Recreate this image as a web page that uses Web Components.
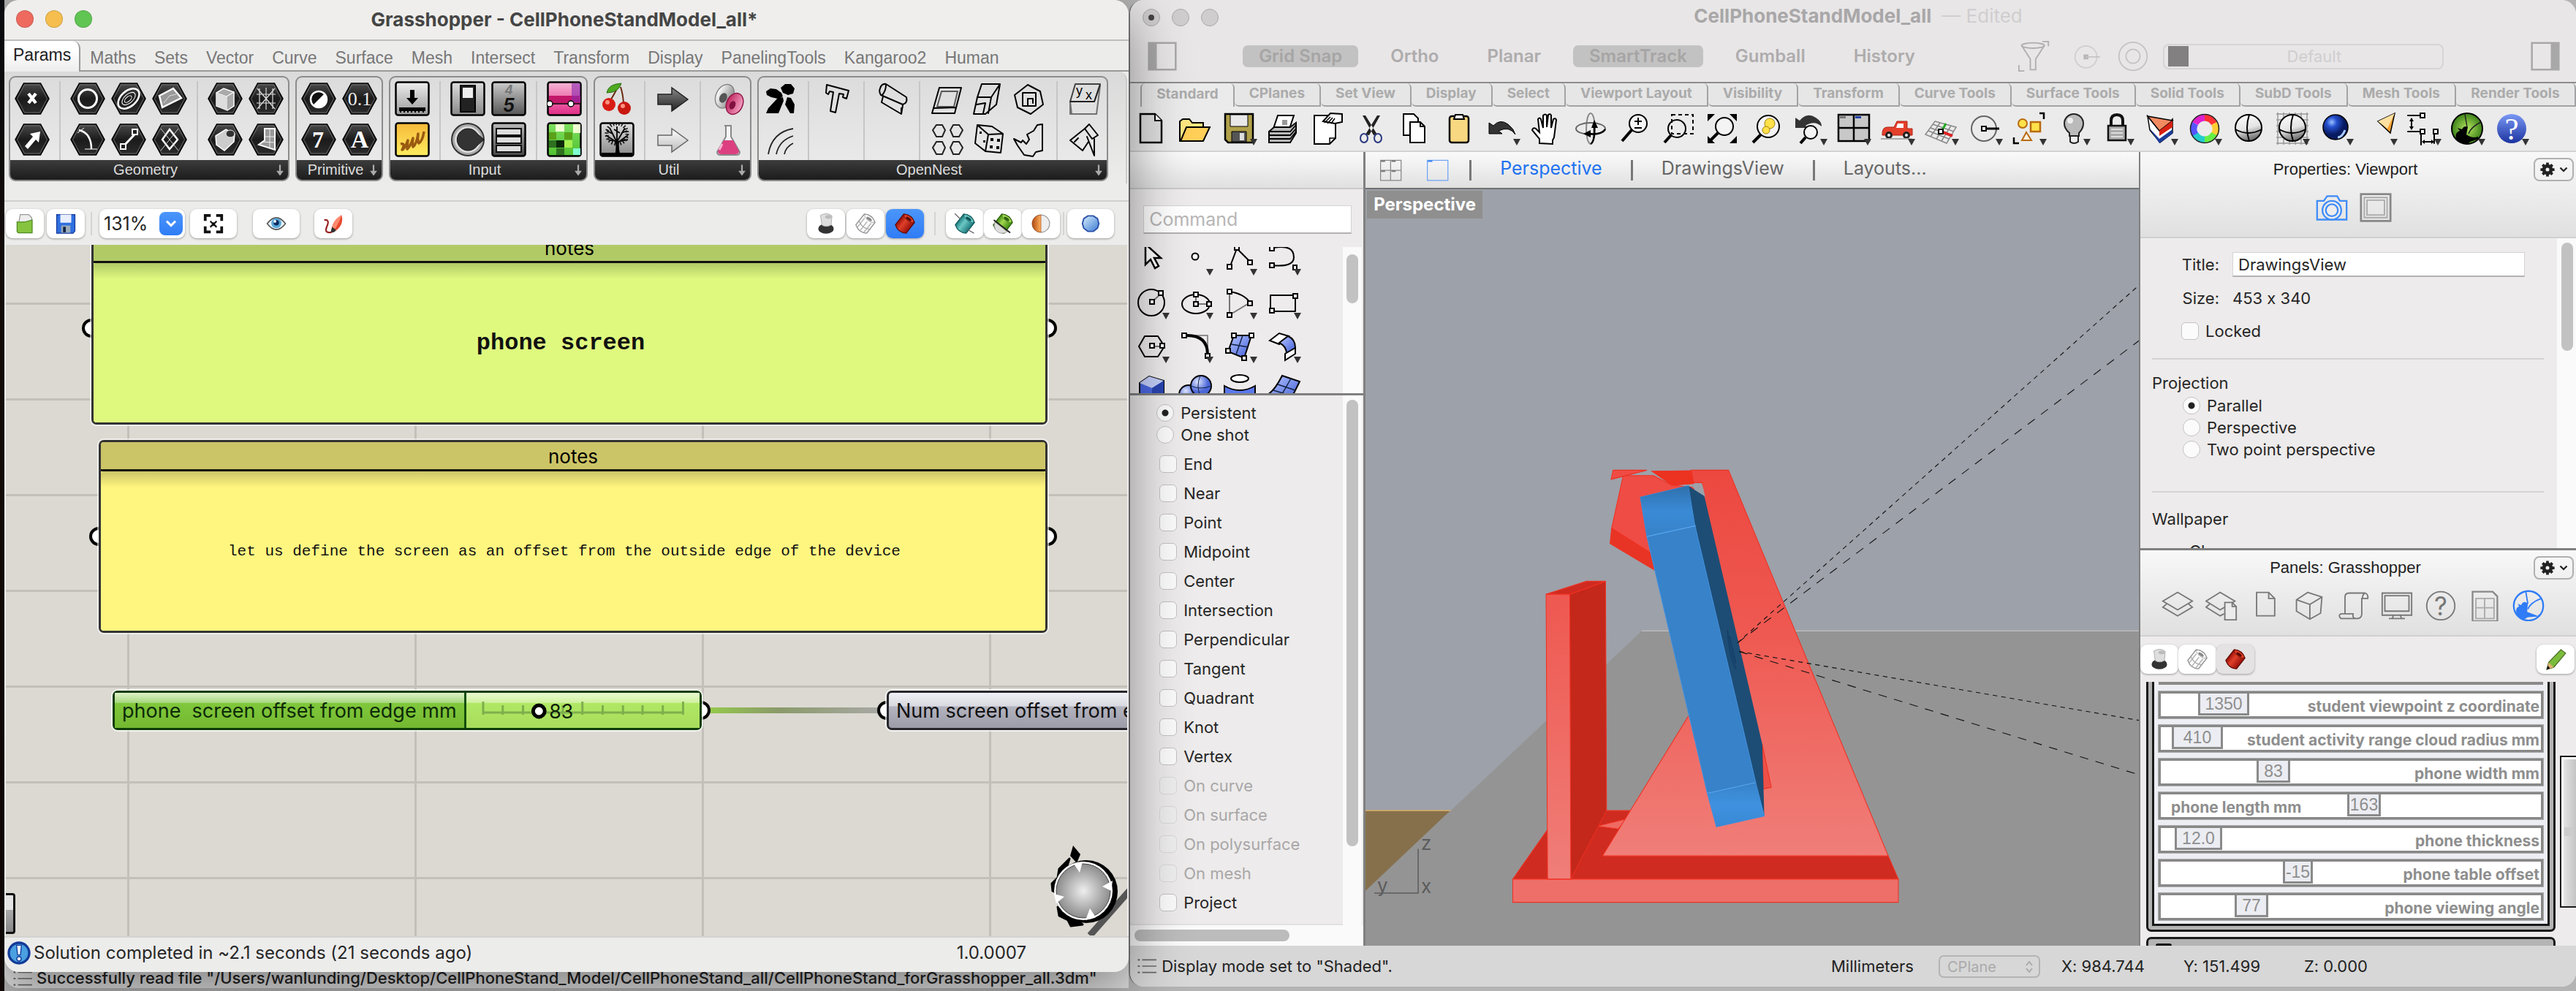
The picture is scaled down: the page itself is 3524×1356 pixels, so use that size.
<!DOCTYPE html>
<html lang="en">
<head>
<meta charset="utf-8">
<title>Grasshopper - CellPhoneStandModel_all*</title>
<style>
html,body{margin:0;height:100%}
body{font-family:Inter,"Liberation Sans",sans-serif;font-size:22px;font-feature-settings:"calt" 0;color:#262626;background:#b3b3b3;overflow:hidden}
</style>
</head>
<body>
<desktop-view></desktop-view>
<script>
/* ---------- small helper for declaring elements ---------- */
function def(tag, style, html) {
  customElements.define(tag, class extends HTMLElement {
    connectedCallback() {
      if (this.shadowRoot) return;
      const root = this.attachShadow({ mode: 'open' });
      root.innerHTML = '<style>*{box-sizing:border-box}button,input,select{font:inherit;color:inherit;margin:0}' + style + '</style>' +
        (typeof html === 'function' ? html(this) : html);
    }
  });
}

/* ---------- icon library, each drawn on a 48 x 48 grid ---------- */
const hex = s => `<defs><linearGradient id="h" x2="0" y2="1"><stop offset="0" stop-color="#4a4a4a"/><stop offset=".5" stop-color="#1b1b1b"/><stop offset="1" stop-color="#2c2c2c"/></linearGradient></defs><path d="M12.500 3h23L47 24 35.500 45h-23L1 24z" fill="url(#h)" stroke="#000" stroke-width="1.500"/><path d="M13.500 5h21L44.500 24 34.500 43h-21L3.500 24z" fill="none" stroke="#777" stroke-width=".8"/>${s}`;
const tile = (fill, s) => `<defs><linearGradient id="t" x2="0" y2="1"><stop offset="0" stop-color="${fill[0]}"/><stop offset="1" stop-color="${fill[1]}"/></linearGradient></defs><rect x="1.500" y="1.500" width="45" height="45" rx="3" fill="url(#t)" stroke="#000" stroke-width="2.500"/>${s}`;
const sq = (x, y) => `<rect x="${x - 3}" y="${y - 3}" width="6" height="6" fill="#fff" stroke="#000" stroke-width="2"/>`;
const tri = '<path d="M38 38h10l-5 9z" fill="#333"/>';
const L = (d, x = '') => `<path d="${d}" fill="none" stroke="#000" stroke-width="2" stroke-linejoin="round" stroke-linecap="round" ${x}/>`;
const blues = '<defs><linearGradient id="b" x1="0" y1="0" x2="1" y2="1"><stop offset="0" stop-color="#b9c8ff"/><stop offset="1" stop-color="#3c5ad8"/></linearGradient><radialGradient id="s" cx=".35" cy=".3"><stop offset="0" stop-color="#dfe6ff"/><stop offset="1" stop-color="#4a66d8"/></radialGradient></defs>';
const can = (a, b, c) => `<defs><linearGradient id="c" x1="0" y1="0" x2="1" y2="0"><stop offset="0" stop-color="${b}"/><stop offset=".4" stop-color="${a}"/><stop offset="1" stop-color="${b}"/></linearGradient></defs><g transform="rotate(38 24 24)"><path d="M9 9Q24-1 39 9v30Q24 49 9 39z" fill="url(#c)" stroke="${c}" stroke-width="2" stroke-linejoin="round"/><ellipse cx="24" cy="10" rx="13" ry="5" fill="${a}" stroke="${c}"/><ellipse cx="24" cy="11" rx="7" ry="3" fill="${c}"/></g>`;
const ICON = {
 point: hex('<path d="M19 17l10 13M29 17L19 30" stroke="#fff" stroke-width="4.500"/>'),
 vector: hex('<path d="M14 33L25 20l-4-4 14-3-2 15-4-4-11 13z" fill="#fff"/>'),
 circle: hex('<circle cx="24" cy="24" r="12.500" fill="none" stroke="#fff" stroke-width="3"/>'),
 ellipse: hex('<g fill="none" stroke="#fff" transform="rotate(-42 24 24)"><ellipse cx="24" cy="24" rx="17" ry="10.500" stroke-width="2.500"/><ellipse cx="24" cy="24" rx="11" ry="6"/><ellipse cx="23" cy="24" rx="6" ry="3"/></g>'),
 surface: hex('<path d="M10 20l19-10 11 13-26 13z" fill="#999" stroke="#fff" stroke-width="2.500"/><path d="M16 30l8-10 9-2" stroke="#ddd" fill="none"/>'),
 boxp: hex('<path d="M12 16l10-6 14 5v19l-9 6-15-6z" fill="#aaa" stroke="#fff" stroke-width="1.500"/><path d="M12 16l14 5 10-6-10 6v19" stroke="#fff" fill="none"/><path d="M12 16l14 5v19l-14-6z" fill="#ddd"/>'),
 mesh: hex('<path d="M24 9v30M11 18h26M11 30h26M15 10v28M33 10v28M12 10l24 28M36 10L12 38" stroke="#ddd" stroke-width="1.200"/>'),
 arc: hex('<path d="M12 11q17 4 17 26" stroke="#fff" stroke-width="2.500" fill="none"/><path d="M10 15l9-7M20 37h17" stroke="#fff"/>'),
 line: hex('<path d="M16 34L33 16" stroke="#fff" stroke-width="3"/><path d="M29 10h7v7h-7zM13 30h7v7h-7z" fill="#222" stroke="#fff" stroke-width="2"/>'),
 field: hex('<path d="M24 10l11 14-11 13-10-13z" fill="none" stroke="#fff" stroke-width="2.500"/><path d="M12 9l24 30M36 9L12 39" stroke="#ccc"/>'),
 brep: hex('<path d="M11 19l14-9 12 6-1 11-13 12-11-8z" fill="#ccc" stroke="#fff" stroke-width="1.500"/><ellipse cx="31" cy="16" rx="6" ry="5" fill="#333" stroke="#eee"/>'),
 patch: hex('<path d="M22 9h14v29l-22-7 8-6z" fill="#999" stroke="#fff" stroke-width="2"/><path d="M29 9v26M22 20h14M18 27l18 1" stroke="#eee"/>'),
 bool: hex('<circle cx="24" cy="25" r="11" fill="#111" stroke="#fff" stroke-width="2.500"/><path d="M32 17a11 11 0 1 1-16 16z" fill="#fff"/>'),
 num: hex('<text x="24" y="33" text-anchor="middle" font-family="Liberation Serif" font-size="26" fill="#eee">0.1</text>'),
 seven: hex('<text x="23" y="35" text-anchor="middle" font-family="Liberation Serif" font-weight="700" font-size="32" fill="#fff">7</text>'),
 letter: hex('<text x="24" y="35" text-anchor="middle" font-family="Liberation Serif" font-weight="700" font-size="34" fill="#fff">A</text>'),
 press: tile(['#eee','#999'], '<path d="M21 12h6v11h5l-8 9-8-9h5z"/><path d="M7 37h34v3H7zM8 37v6M13 37v6M18 37v6M23 37v6M28 37v6M33 37v6M39 37v6" stroke="#000" stroke-width="2"/>'),
 toggle: tile(['#ddd','#888'], '<rect x="14" y="6" width="20" height="36" fill="#222" stroke="#000" stroke-width="2"/><rect x="17" y="9" width="14" height="14" fill="#eee"/>'),
 digits: tile(['#ccc','#555'], '<text x="24" y="18" text-anchor="middle" font-weight="700" font-style="italic" font-size="17" fill="#777">4</text><text x="24" y="42" text-anchor="middle" font-weight="700" font-style="italic" font-size="25" fill="#111">5</text>'),
 graph: tile(['#f7b6d5','#e12a86'], '<path d="M3 20h43v10H3z" fill="#c3176a"/><path d="M34 3h12v26H34z" fill="#8a2ab0" opacity=".6"/><path d="M3 31h43" stroke="#000" stroke-width="1.500"/><circle cx="4" cy="31" r="4" fill="#fff" stroke="#000" stroke-width="1.500"/><circle cx="33" cy="31" r="4" fill="#fff" stroke="#000" stroke-width="1.500"/>'),
 scrib: tile(['#f6b93a','#ffee60'], '<path d="M8 30q7-2 2 8 3 0 8-13-1 8-1 12 4-3 8-15-1 8 0 12 5-4 7-18-1 10 1 13 5-3 7-16" fill="none" stroke="#9a5a10" stroke-width="3.500" stroke-linejoin="round"/>'),
 knob: '<circle cx="24" cy="24" r="22" fill="#aaa" stroke="#333" stroke-width="2"/><circle cx="24" cy="24" r="18" fill="#ddd"/><path d="M46 24l-9-8a15 15 0 1 0 0 16z" fill="#333" stroke="#111"/>',
 list: tile(['#bbb','#444'], '<path d="M7 9h34v9H7zM7 20h34v9H7zM7 32h34v9H7z" fill="#ddd" stroke="#111" stroke-width="2"/>'),
 swatch: tile(['#7fe060','#50c030'], '<path d="M12 3h12v10H12zM36 3h10v12H36z" fill="#efffd0"/><path d="M3 14h10v10H3zM24 14h11v10H24z" fill="#5aa018"/><path d="M13 25h11v10H13z" fill="#0a2a08"/><path d="M24 25h11v10H24z" fill="#a8f050"/><path d="M3 25h10v10H3zM13 36h11v9H13z" fill="#2e7020"/><path d="M36 36h10v9H36z" fill="#80ffd0"/>'),
 cherry: '<path d="M27 5Q19 20 13 30M29 8q4 12 4 26" fill="none" stroke="#6a2a10" stroke-width="2"/><path d="M10 16Q12 4 30 3q-4 13-20 13z" fill="#4faa20" stroke="#2a6a10"/><circle cx="13" cy="32" r="9" fill="#d81c14"/><circle cx="34" cy="37" r="9" fill="#c81810"/><circle cx="11" cy="29" r="3" fill="#ff9080"/><circle cx="32" cy="34" r="3" fill="#ff9080"/>',
 tree: tile(['#ddd','#888'], '<path d="M21 46q3-14 0-20h6q-1 12 2 20zM3 42h42v4H3z"/><path d="M24 28L9 18M24 28L14 8M24 27V6M24 27L35 8M24 29l15-11M12 24l7 2M39 24l-10 2M18 16l-8-4M30 15l8-3M20 10l8 5" stroke="#000" stroke-width="1.800"/><circle cx="24" cy="16" r="14" fill="none" stroke="#111" stroke-width="5" stroke-dasharray="1.500 2.500"/>'),
 arrd: '<defs><linearGradient id="a" x2="0" y2="1"><stop offset="0" stop-color="#888"/><stop offset="1" stop-color="#222"/></linearGradient></defs><path d="M4 18h19V9l22 16-22 16v-9H4z" fill="url(#a)" stroke="#222" stroke-width="1.500"/>',
 arrl: '<defs><linearGradient id="a" x2="0" y2="1"><stop offset="0" stop-color="#fff"/><stop offset="1" stop-color="#bbb"/></linearGradient></defs><path d="M4 18h19V9l22 16-22 16v-9H4z" fill="url(#a)" stroke="#666" stroke-width="1.500"/>',
 pills: '<defs><linearGradient id="p"><stop offset="0" stop-color="#fff"/><stop offset="1" stop-color="#888"/></linearGradient><linearGradient id="q"><stop offset="0" stop-color="#c02860"/><stop offset="1" stop-color="#f4a0c4"/></linearGradient></defs><g transform="rotate(25 20 22)"><ellipse cx="19" cy="21" rx="12" ry="17" fill="url(#p)" stroke="#888" stroke-width="1.500"/><ellipse cx="18" cy="24" rx="5" ry="7" fill="#555"/></g><g transform="rotate(25 33 31)"><ellipse cx="33" cy="31" rx="11" ry="15" fill="url(#q)" stroke="#901848" stroke-width="1.500"/><ellipse cx="31" cy="34" rx="4" ry="6" fill="#801040"/></g>',
 flask: '<path d="M19 5h10M21 5v15L9 41q0 4 5 4h21q5 0 5-4L28 20V5" fill="#f5f5f5" stroke="#888" stroke-width="2"/><path d="M18 25h13l8 15q0 4-5 4H15q-5 0-5-4z" fill="#dc3f80"/><path d="M12 38l4-8" stroke="#ffb0d0" stroke-width="3"/>',
 pin: '<path d="M4 14l6-4 8 1 7 5 2 5-7 3-9-2-6-3zM24 9l6-5 8 0 5 6-2 7-7 2-7-3zM20 23l7-1 1 5-7 17H4l3-7zM33 22l5 1 5 9-1 12-5 0-7-12z"/>',
 tletter: L('M11 5l30 8-3 11-5-2 1-4-6-1-5 26-7-2 4-26-5-1-2 4-3-2z','stroke-width="1.500"'),
 roll: L('M8 10q2-7 8-6l28 18q2 8-5 10L9 19q-3-5-1-9M16 5q0 8-5 14M12 21l-2 8 27 16 2-12M37 45l0-8'),
 flat: L('M13 9h30L34 44H3zM5 37l31-1') + L('M16 14h22l-5 21H10z','opacity=".6"'),
 house: L('M15 4h25l-5 28-15 13H4l5-23zM9 22h19l12-18M28 22l-4 22M8 32l12-2-3 14'),
 spiral: L('M22 5l17 9 4 18-17 13L8 36 4 19zM15 16h18v18H22V24h7v6M15 16v18h8'),
 axes: L('M11 4h34l-8 24H4z','opacity=".7"') + L('M4 28h33l8-22-5 39H4zM4 28l2 17','opacity=".5"') + '<text x="12" y="19" font-size="18" font-family="Liberation Sans">y</text><text x="25" y="25" font-size="18" font-family="Liberation Sans">x</text>',
 fans: '<g fill="none" stroke="#222" stroke-width="1.800"><path d="M7 44Q12 14 41 9M18 44q4-19 23-25M29 44q2-10 12-15"/></g>',
 rings: '<g fill="none" stroke="#222" stroke-width="2"><path d="M9 4l8 0 4 7-4 9-8 0-5-9zM32 4l8 0 5 7-5 9-8 0-4-9zM9 27l8 0 4 8-4 9-8 0-5-9zM32 27l8 0 5 8-5 9-8 0-4-9z"/></g>',
 dice: L('M9 4l20 2 15 10-3 26-21-2L6 29zM9 4l15 13 20-1M24 17l-4 23') + '<path d="M27 22h4v4h-4zM36 23h4v4h-4zM26 32h4v4h-4zM35 33h4v4h-4zM12 13h3v3h-3zM17 25h3v3h-3z"/>',
 rhino: L('M42 3v36l-9 2-4 6-12-2-9-13-5-9 10 5 2-3 5 5 4-6-3-7 9-5 5-8z'),
 fold: L('M30 3l12 15-8 5-10-14zM24 9L4 25l17 14 8-12M27 20l10 26V23M10 27l5-5'),
 folder: '<path d="M14 4h18l7 7v14H10z" fill="#eee" stroke="#999" stroke-width="2"/><path d="M7 20q16 2 33-4v28H11q-4 0-4-4z" fill="#86c440" stroke="#4c8a20" stroke-width="2"/>',
 disk: '<path d="M4 4h40v36l-4 5H4z" fill="#2f6fe0" stroke="#173a9a" stroke-width="2"/><path d="M12 4h24v18H12z" fill="#e8eefc"/><path d="M14 28h20v16H14z" fill="#9ab"/><path d="M18 31h6v12h-6z" fill="#124"/>',
 frame: '<path d="M3 3h15v6H9v9H3zM30 3h15v15h-6V9h-9zM3 30h6v9h9v6H3zM39 30h6v15H30v-6h9zM18 17l4 4h4l4-4 2 3-5 5 5 5-2 3-4-4h-4l-4 4-2-3 5-5-5-5z" fill="#111"/>',
 eye: '<path d="M4 24Q24-2 44 24 24 50 4 24z" fill="#e8f4fb" stroke="#555" stroke-width="2.500"/><circle cx="24" cy="23" r="11" fill="#5aa8d8"/><circle cx="24" cy="22" r="6" fill="#0c2c60"/><circle cx="21" cy="19" r="3" fill="#fff"/>',
 brush: '<path d="M42 5q6 20-12 34l-9-7Q24 16 42 5z" fill="#e84a30"/><path d="M42 5q-4 14-14 30l-7-3Q24 16 42 5z" fill="#ff8a70"/><path d="M21 31l9 7q-4 7-12 5z" fill="#333"/><path d="M4 16q13-2 6 14t10 13" fill="none" stroke="#922" stroke-width="3.500"/>',
 ghost: '<ellipse cx="24" cy="35" rx="17" ry="11" fill="#333"/><path d="M12 6q14-8 25 1l-2 20q-11 6-20 0z" fill="#dedede" stroke="#aaa" stroke-width="1.500"/><ellipse cx="29" cy="9" rx="7" ry="4" fill="#bbb"/>',
 wirecan: can('#fff','#f2f2f2','#888') + '<g transform="rotate(38 24 24)"><path d="M15 16v26M33 16v26M9 28Q24 37 39 28M24 18v27" stroke="#aaa" fill="none" stroke-width="2"/></g>',
 redcan: can('#e0402a','#980f08','#5c0a04'),
 teal: can('#6cc8c4','#1c7c80','#0c5458') + '<path d="M2 2l12 12M28 36l16 9" stroke="#666" stroke-width="2"/>',
 halfg: can('#a4d850','#3c8a10','#2c6010') + '<path d="M6 20L34 42Q18 50 8 38q-5-8-2-18z" fill="#ddd" stroke="#888"/><path d="M4 16l36 28" stroke="#222" stroke-width="3"/>',
 orb: '<defs><linearGradient id="g"><stop offset="0" stop-color="#b04a10"/><stop offset="1" stop-color="#ffb060"/></linearGradient></defs><circle cx="24" cy="24" r="19" fill="#eee" stroke="#999" stroke-width="2"/><path d="M24 5a19 19 0 0 0 0 38z" fill="url(#g)" stroke="#a04010"/>',
 octa: '<defs><linearGradient id="o" x2="1" y2="1"><stop offset="0" stop-color="#d8f0ff"/><stop offset="1" stop-color="#3a78d0"/></linearGradient></defs><path d="M18 7h12l9 6 3 11-3 10-9 7H18l-9-7-3-10 3-11z" fill="url(#o)" stroke="#2a50a8" stroke-width="3"/>',
 pencil: '<path d="M36 3l10 8L20 42 5 46 9 31z" fill="#7cbc3c" stroke="#466a20" stroke-width="2"/><path d="M9 31l11 11L5 46z" fill="#e0b070"/><path d="M7 38l5 6-8 3z" fill="#111"/>',
 alert: '<circle cx="24" cy="24" r="21" fill="#4aa0e0" stroke="#123a98" stroke-width="5"/><path d="M19 8h10l-2 20h-6z" fill="#e8f4ff" stroke="#123a98" stroke-width="2"/><circle cx="24" cy="36" r="4.500" fill="#e8f4ff" stroke="#123a98" stroke-width="2"/>',
 /* main toolbar */
 rnew: '<path d="M8 4h20l9 9v30H8z" fill="#e0e0e0" stroke="#000" stroke-width="2.500"/><path d="M28 4v9h9" fill="#fff" stroke="#000" stroke-width="2"/>',
 ropen: '<path d="M2 14l4-3h9l4 5h15v7H13L4 41H2z" fill="#ffe680" stroke="#000" stroke-width="2"/><path d="M11 22h32l-9 19H3z" fill="#ffcf58" stroke="#000" stroke-width="2"/>',
 rsave: '<path d="M4 4h38v39H8l-4-4z" fill="#b0a04a" stroke="#000" stroke-width="2.500"/><path d="M11 5h24v16H11z" fill="#e8e8e8" stroke="#000"/><path d="M13 28h20v14H13z" fill="#555" stroke="#000"/><path d="M24 30h6v10h-6z" fill="#ddd"/>' + tri,
 rprint: '<path d="M16 6h22l-6 18H10z" fill="#fff" stroke="#000" stroke-width="2"/><path d="M22 12h7v7h-7z" fill="#999"/><path d="M4 28l7-6h22l8-6v14l-8 13H4z" fill="#bbb" stroke="#000" stroke-width="2"/><path d="M4 28h29l8-9M4 33h29l8-9M4 38h29l8-10" fill="none" stroke="#000" stroke-width="1.800"/>',
 rprop: '<path d="M6 6h29v31l-8 8H6z" fill="#fff" stroke="#000" stroke-width="2"/><path d="M27 45v-8h8" fill="none" stroke="#000" stroke-width="1.500"/><path d="M18 14L28 3l16 1v11L34 17z" fill="#fff" stroke="#000" stroke-width="2"/><path d="M20 16l8-8M24 17l7-8M29 17l5-7" stroke="#000" stroke-width="1.500"/>',
 rcut: '<path d="M12 6l4 0 16 26-5 1zM36 6l-4 0L16 32l5 1z" fill="#222"/><ellipse cx="14" cy="37" rx="5" ry="6" fill="none" stroke="#2a3a80" stroke-width="2"/><ellipse cx="33" cy="37" rx="5" ry="6" fill="none" stroke="#2a3a80" stroke-width="2"/>',
 rcopy: '<path d="M8 4h14l6 6v23H8z" fill="#fff" stroke="#000" stroke-width="2"/><path d="M17 15h14l6 6v22H17z" fill="#fff" stroke="#000" stroke-width="2"/><path d="M31 15v6h6" fill="none" stroke="#000" stroke-width="2"/>',
 rpaste: '<rect x="11" y="7" width="26" height="36" rx="3" fill="#f8d880" stroke="#000" stroke-width="2.500"/><path d="M17 11l2-6h10l2 6z" fill="#fff" stroke="#000" stroke-width="2"/>',
 rundo: '<path d="M5 31V16l6 4q9-10 20-2 8 6 10 14-8-12-23-5l5 4z" fill="#333" stroke="#000"/>' + tri,
 rpan: '<path d="M14 44v-6L4 26q1-4 5-2l5 5-2-18q2-3 4 0l3 12V6q3-3 5 0v16l2-17q3-2 4 1v17l3-12q3-2 4 1l-3 24-2 4v5z" fill="#fff" stroke="#000" stroke-width="2"/>',
 rrot: '<ellipse cx="24" cy="24" rx="6" ry="21" fill="none" stroke="#888" stroke-width="2"/><ellipse cx="24" cy="24" rx="20" ry="8" fill="none" stroke="#666" stroke-width="2"/><path d="M22 31Q38 33 44 25M29 18v14q-1 11-5 13" fill="none" stroke="#000" stroke-width="2.500"/><path d="M29 12l-4 11h9zM14 31l10-5v10z"/>',
 rzoom: '<circle cx="29" cy="17" r="12" fill="#f4f4f4" stroke="#000" stroke-width="2"/><path d="M20 26L7 41" stroke="#000" stroke-width="4"/><path d="M24 14h10M29 9v10M24 23h10" stroke="#000" stroke-width="2"/>',
 rzwin: '<path d="M15 5h29v26H15z" fill="none" stroke="#000" stroke-width="2" stroke-dasharray="5 4"/><circle cx="22" cy="24" r="12" fill="none" stroke="#000" stroke-width="2"/><path d="M14 33L5 43" stroke="#000" stroke-width="4"/>',
 rzext: '<path d="M4 4h10L4 14zM44 4v10L34 4zM4 44V34l10 10zM44 44H34l10-10z"/><circle cx="27" cy="21" r="12" fill="#f4f4f4" stroke="#000" stroke-width="2"/><path d="M18 30L8 40" stroke="#000" stroke-width="4"/>',
 rzsel: '<circle cx="27" cy="21" r="15" fill="#f4f4f4" stroke="#000" stroke-width="2"/><circle cx="29" cy="17" r="7" fill="#ffe14a" stroke="#a08000"/><circle cx="24" cy="26" r="5" fill="#ffe14a" stroke="#a08000"/><path d="M17 32L6 43" stroke="#000" stroke-width="4"/>',
 rzprev: '<path d="M4 23V9l6 4q10-12 22-4 8 5 8 12-10-9-22-1l4 3z" fill="#333"/><circle cx="25" cy="29" r="9" fill="#f4f4f4" stroke="#000" stroke-width="2"/><path d="M18 36l-7 8" stroke="#000" stroke-width="4"/>' + tri,
 r4view: '<path d="M3 5h42v36H3z" fill="#c8c8c8" stroke="#000" stroke-width="2.500"/><path d="M24 5v36M3 23h42" stroke="#000" stroke-width="2.500"/><path d="M26 7h8v3h-8z" fill="#24a"/><path d="M5 7h8v3H5z" fill="#777"/>' + tri,
 rcar: '<path d="M3 31q0-9 7-9h9l4-8h14v10h7v9H3z" fill="#e4402c" stroke="#b02010"/><path d="M24 17h8v6h-10z" fill="#fff"/><circle cx="12" cy="33" r="5" fill="#222"/><circle cx="36" cy="33" r="5" fill="#222"/><circle cx="12" cy="33" r="2" fill="#eee"/><circle cx="36" cy="33" r="2" fill="#eee"/><path d="M1 38h42" stroke="#aaa" stroke-width="2"/>' + tri,
 rcplane: '<g stroke="#888" stroke-width="1.500" fill="none"><path d="M15 14l29 8-13 22L2 32zM22 16L9 35M30 18L17 38M37 20L24 41M12 18l29 10M9 23l28 10M6 27l28 11"/></g><path d="M24 28l15 6" stroke="#d22" stroke-width="4"/><path d="M25 26l5-9" stroke="#2a2" stroke-width="3"/>' + sq(23,28) + tri,
 rcirc: '<circle cx="22" cy="24" r="17" fill="none" stroke="#666" stroke-width="2"/><path d="M22 24h21" stroke="#000" stroke-width="3"/>' + sq(22,24) + tri,
 rsel: '<path d="M38 3h6v8M3 36v8h7" fill="none" stroke="#000" stroke-width="2.500"/><circle cx="15" cy="17" r="6" fill="#ffe14a" stroke="#b86a10" stroke-width="2"/><path d="M26 15h13v13H26z" fill="#ffe14a" stroke="#b86a10" stroke-width="2.500"/><path d="M20 29l7 11H14z" fill="#fff3e0" stroke="#b86a10" stroke-width="2"/>' + tri,
 rbulb: '<path d="M12 17a12 12 0 0 1 26 0q0 7-6 13v4H19v-4q-7-6-7-13z" fill="#bbb" stroke="#222" stroke-width="2"/><path d="M20 34h11v8q-6 4-11 0z" fill="#eee" stroke="#222" stroke-width="2"/><circle cx="20" cy="13" r="4" fill="#eee"/>' + tri,
 rlock: '<path d="M16 20v-7q0-8 8-8t8 8v7" fill="none" stroke="#111" stroke-width="4"/><path d="M12 20h24v20H12z" fill="#aaa" stroke="#111" stroke-width="2.500"/><path d="M16 25h16M16 30h16M16 35h16" stroke="#ddd" stroke-width="2"/>' + tri,
 rlayer: '<path d="M6 7l18 22 16-18v19L23 43 9 26z" fill="#fff" stroke="#000" stroke-width="1.500"/><path d="M6 7l34 6-18 14z" fill="#f28a60" stroke="#000" stroke-width="1.500"/><path d="M22 27l18-14v9L22 34z" fill="#d82010"/><path d="M8 23l14 15 18-13v6L22 44z" fill="#1c3c9a"/>' + tri,
 rwheel: '<g fill="none" stroke-width="9"><path d="M24 9a15 15 0 0 1 13 8" stroke="#f33"/><path d="M37 17a15 15 0 0 1 0 15" stroke="#fc3"/><path d="M37 31a15 15 0 0 1-13 8" stroke="#6e4"/><path d="M24 39a15 15 0 0 1-13-8" stroke="#2cc"/><path d="M11 32a15 15 0 0 1 0-15" stroke="#55f"/><path d="M11 17a15 15 0 0 1 13-8" stroke="#d2c"/></g><circle cx="24" cy="24" r="19.500" fill="none" stroke="#222" stroke-width="1.500"/>' + tri,
 rsph: '<defs><linearGradient id="s" x2=".3" y2="1"><stop offset="0" stop-color="#fff"/><stop offset=".6" stop-color="#e4e4e4"/><stop offset="1" stop-color="#777"/></linearGradient></defs><circle cx="24" cy="23" r="18" fill="url(#s)" stroke="#000" stroke-width="2"/><path d="M6 25q18 10 36 0M25 5q-6 18 0 36" fill="none" stroke="#000" stroke-width="2"/>',
 rball: '<defs><radialGradient id="s" cx=".35" cy=".3"><stop offset="0" stop-color="#9ac0ff"/><stop offset=".4" stop-color="#2450d0"/><stop offset="1" stop-color="#081a60"/></radialGradient></defs><circle cx="23" cy="22" r="17" fill="url(#s)" stroke="#000" stroke-width="1.500"/><path d="M36 26q-4 10-10 10" stroke="#acf" stroke-width="3" fill="none"/>' + tri,
 rcone: '<path d="M21 14L44 3 38 30z" fill="#f8a030" stroke="#000" stroke-width="1.500"/><path d="M21 14L44 3 34 24z" fill="#ffe0a0"/>' + tri,
 rdim: L('M2 6h16M2 28h18M7 11v12M38 30v14M20 30v16M25 42h10') + '<path d="M4 14l3-5 3 5zM4 21l3 5 3-5zM25 39v6l-4-3zM34 39v6l4-3z"/>' + sq(22,6) + sq(22,28) + sq(40,28) + tri,
 rgh: '<defs><radialGradient id="g"><stop offset="0" stop-color="#b4e860"/><stop offset="1" stop-color="#3c8018"/></radialGradient></defs><circle cx="23" cy="24" r="21" fill="url(#g)" stroke="#000" stroke-width="2"/><path d="M8 38q-2-9 5-11l-3-4 6 2q3-6 8-3l-2 10q8 6 16 3l1 3-12 4q-2 3-6 3-8-1-13-7z"/><path d="M20 4l3 18M42 15Q28 22 25 31" stroke="#222" stroke-width="1.500" fill="none"/>' + tri,
 rhelp: '<defs><linearGradient id="q" x2="0" y2="1"><stop offset="0" stop-color="#7a98f4"/><stop offset="1" stop-color="#1c34a0"/></linearGradient></defs><circle cx="24" cy="24" r="20" fill="url(#q)"/><text x="24" y="39" text-anchor="middle" font-family="Liberation Serif" font-size="43" fill="#fff">?</text>' + tri,
 /* side palette */
 parrow: '<path d="M15 4v28l7-7 6 12 5-3-6-11h9z" fill="#fff" stroke="#000" stroke-width="2.500"/>',
 ppoint: '<circle cx="23" cy="21" r="4.500" fill="#fff" stroke="#000" stroke-width="2"/>' + tri,
 ppoly: L('M11 34L20 10 38 28') + sq(10,35) + sq(20,9) + sq(38,29) + tri,
 pcurve: L('M10 9Q38 4 38 22 38 36 8 33') + sq(8,10) + sq(8,33) + '<path d="M33 6h7M37 33h5v6h-5z" stroke="#000" stroke-width="2" fill="none"/>' + tri,
 pcircle: L('M23 24L36 12','opacity=".5"') + '<circle cx="23" cy="24" r="18" fill="none" stroke="#000" stroke-width="2"/>' + sq(24,23) + sq(36,11) + tri,
 pell: L('M24 14v12h18','opacity=".5"') + '<ellipse cx="24" cy="26" rx="19" ry="13" fill="none" stroke="#000" stroke-width="2"/>' + sq(24,13) + sq(24,26) + sq(42,26) + tri,
 parc: L('M10 9v32l28-17','opacity=".5"') + L('M10 9Q30 12 38 24') + sq(10,9) + sq(10,41) + sq(38,25) + tri,
 prect: L('M6 14h34v22H6z') + sq(40,15) + sq(8,35) + tri,
 phex: L('M14 10h18l9 14-9 14H14L6 24z') + L('M24 24h14','opacity=".5"') + sq(24,23) + sq(38,23) + tri,
 pfil: L('M10 9h30v26','opacity=".4"') + '<path d="M12 9q28 0 28 26" fill="none" stroke="#000" stroke-width="4"/>' + sq(8,9) + sq(40,37) + tri,
 psrf: blues + '<path d="M16 9h24L30 40 8 31z" fill="url(#b)" stroke="#000" stroke-width="2"/><path d="M28 9L19 35M12 21l24 4" stroke="#124" stroke-width="1.500"/>' + sq(16,9) + sq(40,9) + sq(8,30) + sq(30,40) + tri,
 pbend: blues + '<path d="M5 16L18 6l13 4-13 11z" fill="#fff" stroke="#000" stroke-width="2"/><path d="M18 19L30 10q10 4 10 16l-12 8q0-10-10-15z" fill="url(#b)" stroke="#000" stroke-width="2"/><path d="M26 34l14-8v8L26 43z" fill="#fff" stroke="#000" stroke-width="2"/>' + tri,
 pbox: blues + '<path d="M7 14l13-9 20 6v34H7z" fill="#4a66e0" stroke="#000" stroke-width="2"/><path d="M7 14l13-9 20 6-16 10z" fill="#c4cffa"/><path d="M24 21l16-10v34H24z" fill="#2a44b0"/>',
 psphs: blues + '<circle cx="14" cy="30" r="13" fill="url(#s)" stroke="#000" stroke-width="2"/><circle cx="31" cy="18" r="14" fill="url(#s)" stroke="#000" stroke-width="2"/><path d="M17 18q14 6 28 0M30 4q-6 14 0 28" stroke="#124" fill="none"/>',
 ppipe: blues + '<ellipse cx="24" cy="8" rx="12" ry="5" fill="#fff" stroke="#000" stroke-width="2"/><path d="M3 18q21 12 42 0v27H3z" fill="#5a78ec" stroke="#000" stroke-width="2"/>',
 pmesh: blues + '<path d="M22 4l24 8L32 40 2 30q10-6 20-26z" fill="url(#b)" stroke="#000" stroke-width="2"/><path d="M34 8L18 36M16 16l24 8M10 24l26 8" stroke="#124" stroke-width="1.500"/>',
 /* panel tabs, line style */
 camera: '<g fill="none" stroke="#3f8cf8" stroke-width="2.500"><path d="M2 14h10l5-7h15l4 7h10v28H2z"/><circle cx="24" cy="28" r="14" fill="#ececec"/><circle cx="24" cy="28" r="9"/></g>',
 vframe: '<g fill="none" stroke="#888"><path d="M2 4h44v40H2z" stroke-width="3"/><path d="M7 9h34v30H7zM11 13h26v22H11z" stroke="#aaa" stroke-width="2"/></g>',
 layers: '<g fill="none" stroke="#777" stroke-width="2"><path d="M24 5l22 13-22 13L2 18z"/><path d="M8 22l-6 5 22 13 22-13-6-5"/></g>',
 layers2: '<g fill="none" stroke="#777" stroke-width="2"><path d="M22 5l22 13-22 13L1 18z"/><path d="M7 22l-6 5 21 13 6-3M42 19"/><path d="M29 20h11l6 6v20H29z" fill="#ebebeb"/><path d="M40 20v6h6"/></g>',
 page: '<g fill="none" stroke="#777" stroke-width="2"><path d="M11 5h18l9 9v26H11zM29 5v9h9"/></g>',
 cube: '<g fill="none" stroke="#777" stroke-width="2"><path d="M22 5l21 7-2 24-16 9-20-12V16zM5 16l20 7 18-11M25 23v22"/></g>',
 scroll: '<g fill="none" stroke="#777" stroke-width="2"><path d="M12 38V12q0-6 6-6h24q5 2 4 8h-9v24q-1 6-7 6H6q-5-5 0-7h18q-1 7 4 7M38 14q0-6 4-8"/></g>',
 monitor: '<g fill="none" stroke="#777" stroke-width="2"><path d="M2 6h44v33H2zM6 10h36v23H6zM19 39l-2 5h14l-2-5M12 44h24"/></g>',
 help: '<circle cx="24" cy="25" r="21" fill="none" stroke="#777" stroke-width="2"/><text x="24" y="39" text-anchor="middle" font-size="38" fill="#777">?</text>',
 window: '<g fill="none" stroke="#888" stroke-width="2"><path d="M6 4h30l7 7v37H6z" stroke-width="2.500"/><path d="M11 14h27v30H11zM24 14v30M11 28h27" stroke="#aaa"/></g>',
 ghblue: '<circle cx="24" cy="25" r="22" fill="none" stroke="#2f7cf6" stroke-width="2.500"/><path d="M6 36q-2-8 4-10l-2-4 5 2q4-8 10-2l-1 12 16 6 2-3 1 4-18 1-7 4q-6 0-10-10z" fill="#2f7cf6"/><path d="M20 4l3 18M43 14q-16 6-20 16" fill="none" stroke="#2f7cf6" stroke-width="2"/>',
 gear: '<g transform="translate(24 24)"><circle r="13" fill="none" stroke="#222" stroke-width="9"/><path d="M0-23V23M-23 0H23M-16-16L16 16M16-16L-16 16" stroke="#222" stroke-width="9"/><circle r="6" fill="#f2f2f2"/></g>',
 chev: '<path d="M6 14l18 18 18-18" fill="none" stroke="currentColor" stroke-width="9"/>',
 down: '<path d="M21 4h6v22h10L24 44 11 26h10z" fill="#aaa"/>',
 view4: '<path d="M1 2h45v44H1zM23 2v44M1 24h45" fill="none" stroke="#888" stroke-width="2"/><path d="M2 4h9M25 4h9M2 26h9M25 26h9" stroke="#777" stroke-width="3"/>',
 view1: '<path d="M1 2h45v44H1z" fill="none" stroke="#6fa4f6" stroke-width="2"/><path d="M2 4h10" stroke="#2f7cf6" stroke-width="3"/>',
 sideL: '<path d="M2 2h44v44H2z" fill="none" stroke="#a9a8a8" stroke-width="3"/><path d="M2 2h13v44H2z" fill="#a9a8a8"/>',
 sideR: '<path d="M2 2h44v44H2z" fill="none" stroke="#a9a8a8" stroke-width="3"/><path d="M33 2h13v44H33z" fill="#a9a8a8"/>',
 funnel: '<g fill="none" stroke="#b0aeaf" stroke-width="2"><ellipse cx="22" cy="8" rx="17" ry="4"/><path d="M5 8l13 20v16h8V28L39 8M36 2h9v7M1 37v9h8"/></g>',
 dotc: '<circle cx="20" cy="25" r="18" fill="none" stroke="#cfcdce" stroke-width="2"/><path d="M16 21h8v8h-8z" fill="#b8b6b7"/><path d="M20 25h23" stroke="#c4c2c3" stroke-width="2"/>',
 ring2: '<g fill="none" stroke="#c4c2c3" stroke-width="2"><circle cx="24" cy="24" r="22"/><circle cx="24" cy="24" r="11"/></g>',
 log: '<g stroke="#6a6a6a" stroke-width="3" fill="none"><path d="M12 8h36M12 24h36M12 40h36"/><path d="M1 8h5M1 24h5M1 40h5" stroke-width="4"/></g>'
};
ICON.rsphg = '<path d="M2 4h44M2 12h44M2 20h44M2 28h44M2 36h44M2 44h44M4 2v44M12 2v44M20 2v44M28 2v44M36 2v44M44 2v44" stroke="#999" stroke-width="1.500"/>' + ICON.rsph + tri;

def('ui-icon', ':host{display:inline-block;flex:none;width:var(--s,48px);height:var(--s,48px)}svg{display:block;width:100%;height:100%;overflow:hidden}',
  el => `<svg viewBox="0 0 48 48" aria-hidden="true">${ICON[el.getAttribute('name')] || ''}</svg>`);

const iconBtns = list => list.split(' ').map(n => `<button aria-label="${n}"><ui-icon name="${n}"></ui-icon></button>`).join('');

/* ---------- Grasshopper window ---------- */
def('gh-ribbon-group',
 `:host{display:flex;flex-direction:column;height:144px;border:2px solid #8c8c8c;border-radius:9px;overflow:hidden;background:linear-gradient(#dcdcdc,#ececec)}
  .g{display:flex;flex:1;padding:5px 6px 0}
  .c{display:grid;grid-auto-flow:column;grid-template-rows:48px 48px;gap:8px}
  .c+.c{margin-left:13px;padding-left:13px;border-left:2px solid #c6c6c6}
  button{width:48px;height:48px;padding:0;border:0;background:none}
  .l{display:flex;align-items:center;height:27px;padding:0 2px;color:#ddd;font:20px/27px "Liberation Sans",Arial,sans-serif;background:linear-gradient(#3c3c3c,#1c1c1c);--s:18px}
  .l span{flex:1;text-align:center;margin-right:-8px}`,
 el => `<div class="g">${el.getAttribute('icons').split('|').map(c => `<div class="c">${iconBtns(c)}</div>`).join('')}</div>
  <div class="l"><span>${el.getAttribute('label')}</span><ui-icon name="down"></ui-icon></div>`);

def('mac-button',
 `:host{display:block;flex:none}button{display:grid;place-items:center;width:var(--w,52px);height:40px;padding:0;border:0;border-radius:9px;background:#fff;box-shadow:0 1px 3px rgba(0,0,0,.35);--s:30px}
  :host([on]) button{background:linear-gradient(#4b96fa,#2f7cf6)}:host([dim]) button{background:#e4e2e2}`,
 el => `<button aria-label="${el.getAttribute('icon')}"><ui-icon name="${el.getAttribute('icon')}"></ui-icon></button>`);

def('gh-note',
 `:host{position:absolute;display:flex;flex-direction:column;border:3px solid #333;border-radius:7px;box-shadow:0 0 0 2px rgba(255,255,255,.6);background:var(--body)}
  .h{height:40px;background:var(--head);border-bottom:3px solid #111;border-radius:4px 4px 0 0;text-align:center;font:26px/40px Inter,sans-serif;color:#000}
  .b{flex:1;display:grid;place-items:center;background:linear-gradient(var(--head),var(--body) 22px);border-radius:4px;color:#111;padding:2px 24px 0 0}
  i{position:absolute;z-index:-1;top:50%;width:26px;height:26px;margin-top:-13px;border:4px solid #000;border-radius:50%;background:#fff}
  .l{left:-16px}.r{right:-16px}`,
 '<i class="l"></i><i class="r"></i><div class="h">notes</div><div class="b"><slot></slot></div>');

def('gh-slider',
 `:host{position:absolute;display:flex;height:54px;font:27px/50px Inter,sans-serif;color:#0c2a08}
  .w{position:relative;display:flex;flex:1;border:3px solid #0c3c08;border-radius:7px;box-shadow:0 0 0 2px rgba(255,255,255,.7)}
  label{padding:0 10px;flex:none;white-space:pre;border-right:3px solid #14500c;background:linear-gradient(#dff3c8,#a8d880 28%,#80c83c 29%,#74b830)}
  .t{position:relative;flex:1;display:flex;align-items:center;padding:0 22px;background:linear-gradient(#e8fcd0,#d0f0a0 28%,#b0e864 29%,#a8dc5c)}
  svg{width:100%;height:24px;overflow:visible}
  input{position:absolute;inset:0;width:100%;height:100%;opacity:0}
  i{position:absolute;z-index:-1;right:-15px;top:11px;width:26px;height:26px;border:4px solid #000;border-radius:50%;background:#fff}`,
 `<div class="w"><i></i><label for="r">phone  screen offset from edge mm</label><div class="t">
  <svg viewBox="0 0 278 24" preserveAspectRatio="xMidYMid meet"><path d="M0 15h278M1 0v18M28 5v13M56 5v13M84 5v13M111 5v13M138 0v18M166 5v13M194 5v13M221 5v13M249 5v13M277 0v18" stroke="#7eae4c" stroke-width="3" fill="none"/><circle cx="78" cy="13" r="8" fill="#fff" stroke="#000" stroke-width="5"/><text x="92" y="23" font-size="27" fill="#0c1c08">83</text></svg>
  <input id="r" type="range" min="0" max="300" value="83"></div></div>`);

def('gh-canvas',
 `:host{position:relative;display:block;flex:1;margin:0 2px;overflow:hidden;isolation:isolate;background:
   linear-gradient(90deg,#c3c0ba 3px,transparent 3px) 166px 0/393px 100%,linear-gradient(#c3c0ba 3px,transparent 3px) 0 79px/100% 131px,#dcd9d2}
  .a{left:117px;top:-18px;width:1308px;height:264px;--head:#b2ca66;--body:#dff97f;font:700 32px/36px "Liberation Mono",monospace}
  .b{left:127px;top:267px;width:1298px;height:264px;--head:#ccc567;--body:#fff680;font:21px/24px "Liberation Mono",monospace}
  .s{left:146px;top:610px;width:806px}
  .wire{position:absolute;left:964px;top:633px;width:232px;height:8px;background:linear-gradient(90deg,#94c84c,#8a9a6a 40%,#a8a8a4)}
  .n{position:absolute;left:1205px;top:610px;width:500px;height:54px;padding-left:10px;border:3px solid #26262c;border-radius:7px;box-shadow:0 0 0 2px rgba(255,255,255,.7);font:27px/50px Inter,sans-serif;color:#111;background:linear-gradient(#f0f0f6,#d8d8e0 38%,#b4b4c0 39%,#9c9ca8)}
  .g{position:absolute;left:1192px;top:624px;width:26px;height:26px;border:4px solid #000;border-radius:50%;background:#fff}
  .k{position:absolute;left:-10px;top:887px;width:23px;height:56px;border:3px solid #111;border-radius:4px;background:linear-gradient(#e4e4e4 40%,#aaa 41%,#888)}
  svg{position:absolute;left:1425px;top:818px;width:120px;height:127px}`,
 `<gh-note class="a">phone screen</gh-note><gh-note class="b">let us define the screen as an offset from the outside edge of the device</gh-note>
  <div class="wire"></div><div class="g"></div><gh-slider class="s"></gh-slider><div class="n">Num screen offset from edge</div><div class="k"></div>
  <svg viewBox="0 0 120 127"><defs><radialGradient id="c"><stop offset="0" stop-color="#eee"/><stop offset="1" stop-color="#8c8c8c"/></radialGradient></defs>
  <path d="M58 127l60-68" stroke="#555" stroke-width="9"/><path d="M35 4l10 12-5 12-9-10z"/>
  <circle cx="53" cy="67" r="43"/><path d="M30 22l-14 14-2 12-8 8 1 10 8 4zM14 88l2 12 12 6 4 8 16-2z" stroke="#000" stroke-width="3" stroke-linejoin="round"/>
  <circle cx="49" cy="66" r="40" fill="#fff"/><circle cx="49" cy="66" r="37" fill="url(#c)" stroke="#444"/>
  <path d="M36 29l12-3-4 15zM89 52l-14 8 12 6zM9 70l14 4-11 9zM52 106l6-16 8 12z" fill="#fff"/></svg>`);

def('gh-window',
 `:host{position:relative;z-index:2;display:flex;flex-direction:column;min-height:0;border-radius:20px;overflow:hidden;background:#ececeb}
  header{height:54px;position:relative;display:grid;place-items:center;padding-right:6px;background:#efeeec;font:700 26px/50px Inter,sans-serif;color:#454545}
  .tl{position:absolute;left:16px;top:14px;display:flex;gap:16px}.tl i{width:24px;height:24px;border-radius:50%;border:1px solid rgba(0,0,0,.15)}
  nav{display:flex;height:44px;border-top:2px solid #bdbdbd;font:23px/28px "Liberation Sans",Arial,sans-serif}
  nav button{border:0;background:none;color:#777;padding:5px 12px 0 13px;border-bottom:2px solid #9a9a9a;white-space:nowrap}
  nav button:first-child{color:#222;padding:0 11px 4px 12px;background:linear-gradient(#fff 30%,#ececec);border:2px solid #999;border-width:0 2px 0 0;border-radius:0 10px 0 0}
  nav span{flex:1;border-bottom:2px solid #9a9a9a}
  .rib{display:flex;gap:8px;padding:6px;height:153px;margin-right:2px;border-right:2px solid #ccc;border-radius:0 12px 0 0;background:linear-gradient(#dadada,#ececeb)}
  .bar{margin-top:23px;height:61px;border-top:2px solid #d0d0ce;display:flex;align-items:center;padding:0 20px 0 2px}
  .bar hr{width:2px;height:32px;border:0;background:#d4d4d2;margin:0 14px 0 8px}
  .z{position:relative;margin-right:7px}
  select{appearance:none;display:block;width:117px;height:40px;padding:0 0 0 6px;border:0;border-radius:9px;background:#fff;box-shadow:0 1px 3px rgba(0,0,0,.35);font:25px/36px Inter,sans-serif}
  .z span{position:absolute;right:3px;top:4px;width:32px;height:32px;border-radius:8px;background:linear-gradient(#4b96fa,#2f7cf6);display:grid;place-items:center;color:#fff;--s:16px;pointer-events:none}
  footer{display:flex;align-items:center;gap:4px;height:49px;border-top:2px solid #d4d3d1;padding:0 140px 6px 4px;font-size:24px;line-height:30px;--s:32px}
  footer span{flex:1}`,
 `<header><div class="tl"><i style="background:#ee6a5f"></i><i style="background:#f5be4f"></i><i style="background:#61c554"></i></div>Grasshopper - CellPhoneStandModel_all*</header>
  <nav>${'Params Maths Sets Vector Curve Surface Mesh Intersect Transform Display PanelingTools Kangaroo2 Human'.split(' ').map(t => `<button>${t}</button>`).join('')}<span></span></nav>
  <div class="rib">
   <gh-ribbon-group label="Geometry" icons="point vector|circle arc ellipse line surface field|boxp brep mesh patch"></gh-ribbon-group>
   <gh-ribbon-group label="Primitive" icons="bool seven num letter"></gh-ribbon-group>
   <gh-ribbon-group label="Input" icons="press scrib|toggle knob digits list|graph swatch"></gh-ribbon-group>
   <gh-ribbon-group label="Util" icons="cherry tree|arrd arrl|pills flask"></gh-ribbon-group>
   <gh-ribbon-group label="OpenNest" icons="pin fans|tletter|roll|flat rings house dice spiral rhino|axes fold"></gh-ribbon-group>
  </div>
  <div class="bar">
   <mac-button icon="folder" style="margin-right:4px"></mac-button><mac-button icon="disk"></mac-button><hr style="margin-right:10px">
   <div class="z"><select aria-label="Zoom"><option>131%</option></select><span><ui-icon name="chev"></ui-icon></span></div>
   <mac-button icon="frame" style="--w:64px;margin-right:22px"></mac-button><mac-button icon="eye" style="--w:64px;margin-right:20px"></mac-button><mac-button icon="brush"></mac-button>
   <span style="flex:1"></span>
   <mac-button icon="ghost"></mac-button><mac-button icon="wirecan" style="margin:0 2px"></mac-button><mac-button icon="redcan" on></mac-button><hr style="margin-left:14px">
   <mac-button icon="teal"></mac-button><mac-button icon="halfg"></mac-button><mac-button icon="orb"></mac-button><hr style="margin:0 4px"><mac-button icon="octa" style="--w:64px"></mac-button>
  </div>
  <gh-canvas></gh-canvas>
  <footer><ui-icon name="alert"></ui-icon><span>Solution completed in ~2.1 seconds (21 seconds ago)</span>1.0.0007</footer>`);

/* ---------- Rhino window ---------- */
def('rhino-toolbar',
 `:host{display:block;background:#ebebeb}
  .top{height:112px;background:#e8e6e7;display:flex;flex-direction:column;color:#aeacad}
  .t{position:relative;height:48px;display:flex;align-items:center;justify-content:center;gap:14px;font:26px/40px Inter,sans-serif;color:#d0cecf;padding:0 0 4px 14px}
  .t b{color:#a9a7a8}.tl{position:absolute;left:17px;top:12px;display:flex;gap:16px}.tl i{width:24px;height:24px;border-radius:50%;border:1px solid #aaa;background:#cfcdce;display:grid;place-items:center}
  .tl i:first-child::after{content:"";width:8px;height:8px;border-radius:50%;background:#444}
  .m{display:flex;align-items:center;height:58px;padding:0 22px 0 24px;font:600 24px/30px Inter,sans-serif;--s:40px}
  .m button{border:0;background:none;padding:0 22px;height:30px;border-radius:7px;margin-right:22px;white-space:nowrap}.m .on{background:#c3c2c2;color:#a6a5a5}
  .m button.first{margin-left:90px}
  .sel{position:relative;flex:0 0 384px;margin-left:20px}.sel select{appearance:none;width:100%;height:35px;border:2px solid #d6d4d5;border-radius:8px;background:none;color:#d0cecf;font:400 22px/28px Inter,sans-serif;text-align:center;text-align-last:center;padding:0 0 0 30px;opacity:1}
  .sel i{position:absolute;left:7px;top:3px;width:28px;height:28px;background:#828081}
  .tabs{display:flex;height:34px;border-top:2px solid #8e8d8e;padding-left:14px;font:700 19px/26px Inter,sans-serif;color:#ababab;overflow:hidden}
  .tabs button{flex:none;border:0;background:#e6e6e6;padding:0 20px 3px 20px;border:2px solid #a3a2a5;border-width:0 2px 2px 0;border-radius:0 6px 0 6px;white-space:nowrap}
  .tabs button:first-child{background:none;border-bottom:0;border-left:2px solid #a3a2a5;border-radius:6px 6px 0 0}
  .tabs button:last-child{flex:1 0 auto}
  .ic{display:flex;height:62px;padding:6px 0 0 0;border-bottom:2px solid #d2d2d2}.ic button{flex:none;width:60px;height:48px;border:0;padding:0 6px;background:none}`,
 `<div class="top"><div class="t"><div class="tl"><i></i><i></i><i></i></div><b>CellPhoneStandModel_all</b>— Edited</div>
  <div class="m"><ui-icon name="sideL"></ui-icon><button class="on first">Grid Snap</button><button>Ortho</button><button>Planar</button><button class="on">SmartTrack</button><button>Gumball</button><button>History</button>
  <span style="flex:96 1 0"></span><ui-icon name="funnel" style="--s:44px"></ui-icon><ui-icon name="dotc" style="margin-left:32px"></ui-icon><ui-icon name="ring2" style="margin-left:20px;--s:42px"></ui-icon>
  <div class="sel"><select aria-label="Layer"><option>Default</option></select><i></i></div><span style="flex:118 1 0"></span><ui-icon name="sideR"></ui-icon></div></div>
  <div class="tabs">${['Standard','CPlanes','Set View','Display','Select','Viewport Layout','Visibility','Transform','Curve Tools','Surface Tools','Solid Tools','SubD Tools','Mesh Tools','Render Tools'].map(t => `<button>${t}</button>`).join('')}</div>
  <div class="ic">${iconBtns('rnew ropen rsave rprint rprop rcut rcopy rpaste rundo rpan rrot rzoom rzwin rzext rzsel rzprev r4view rcar rcplane rcirc rsel rbulb rlock rlayer rwheel rsph rsphg rball rcone rdim rgh rhelp')}</div>`);

def('check-option',
 `:host{display:block}label{display:flex;align-items:center;gap:var(--g,9px);height:var(--h,40px);font-size:22px;line-height:28px}
  input{appearance:none;width:24px;height:24px;border:1px solid #c4c2c2;border-radius:6px;background:#fbfbfb}
  :host([off]) label{color:#a9a7a8}:host([off]) input{background:#efeeee;border-color:#dad8d8}`,
 el => `<label><input type="checkbox"${el.hasAttribute('off') ? ' disabled' : ''}>${el.getAttribute('label')}</label>`);

def('radio-list',
 `:host{display:block}label{display:flex;align-items:center;gap:9px;height:30px;font-size:22px;line-height:28px}
  input{appearance:none;width:24px;height:24px;border:1px solid #c4c2c2;border-radius:50%;background:#fbfbfb}
  input:checked{background:radial-gradient(circle,#222 4px,#fbfbfb 5px)}`,
 el => el.getAttribute('options').split('|').map((o, i) => `<label><input type="radio" name="o"${i ? '' : ' checked'}>${o}</label>`).join(''));

def('rhino-side',
 `:host{display:flex;flex-direction:column;flex:0 0 322px;min-height:0;border-right:3px solid #808080;background:#edebeb}
  .h{height:51px;flex:none;background:linear-gradient(#fafafa,#e0e0e0);border-bottom:2px solid #cacaca}
  input.c{display:block;flex:none;width:285px;height:39px;margin:22px 0 18px 18px;padding:0 7px;border:1px solid #d4d2d2;border-bottom:2px solid #b4b2b2;background:#fff;font-size:25px}
  input.c::placeholder{color:#b8b6b6;opacity:1}
  .p{display:flex;height:200px;flex:none;overflow:hidden}
  .p .g{flex:1;display:grid;grid-template-columns:repeat(4,60px);grid-auto-rows:60px;align-content:start;margin-top:-8px}
  .p button{border:0;background:none;padding:0 6px;height:48px}
  .sb{width:26px;margin-right:2px;background:#fafafa;padding:10px 5px 0}.sb i{display:block;width:16px;border-radius:8px;background:#c3c2c2}
  .d{height:3px;flex:none;background:#808080}
  .o{display:flex;flex:1;min-height:0}.l{flex:1;padding:9px 0 0 36px;border-bottom:2px solid #e2e0e0}
  .l div{padding:5px 0 0 4px}
  .hs{height:28px;flex:none;background:#fafafa;padding:6px}.hs i{display:block;width:212px;height:16px;border-radius:8px;background:#bdbcbc}`,
 `<div class="h"></div><input class="c" placeholder="Command" aria-label="Command">
  <div class="p"><div class="g">${iconBtns('parrow ppoint ppoly pcurve pcircle pell parc prect phex pfil psrf pbend pbox psphs ppipe pmesh')}</div><div class="sb"><i style="height:67px"></i></div></div>
  <div class="d"></div>
  <div class="o"><div class="l"><radio-list options="Persistent|One shot"></radio-list><div>
   ${['End','Near','Point','Midpoint','Center','Intersection','Perpendicular','Tangent','Quadrant','Knot','Vertex','-On curve','-On surface','-On polysurface','-On mesh','Project'].map(t => t[0] === '-' ? `<check-option off label="${t.slice(1)}"></check-option>` : `<check-option label="${t}"></check-option>`).join('')}
  </div></div><div class="sb" style="padding-top:6px"><i style="height:611px"></i></div></div>
  <div class="hs"><i></i></div>`);

def('rhino-viewport',
 `:host{display:flex;flex-direction:column;flex:1;min-width:0}
  nav{display:flex;align-items:center;height:51px;background:linear-gradient(#fafafa,#e0e0e0);border-bottom:2px solid #707272;padding:0 20px;--s:30px;font:25px/30px Inter,sans-serif;color:#666}
  nav button{border:0;background:none;padding:0 0 6px;color:inherit}nav button.on{color:#2273f0}
  nav hr{width:3px;height:28px;border:0;background:#777;margin:0 39px}
  .v{position:relative;flex:1;min-height:0;background:#9da1a9}
  .v>span{position:absolute;left:2px;top:2px;padding:0 9px;height:38px;background:#8f8f8f;color:#fff;font:700 24px/38px Inter,sans-serif}
  svg{display:block;position:absolute;inset:0;width:100%;height:100%}`,
 `<nav><ui-icon name="view4"></ui-icon><ui-icon name="view1" style="margin-left:34px"></ui-icon><hr style="margin-left:28px"><button class="on">Perspective</button><hr><button>DrawingsView</button><hr><button>Layouts...</button></nav>
 <div class="v"><svg viewBox="0 0 1058 1034" preserveAspectRatio="xMinYMin slice">
  <defs><linearGradient id="r" x2="0" y2="1"><stop offset="0" stop-color="#ec4840"/><stop offset=".4" stop-color="#ee5850"/><stop offset="1" stop-color="#f07e79"/></linearGradient>
  <linearGradient id="f" x2="0" y2="1"><stop offset="0" stop-color="#ee5850"/><stop offset="1" stop-color="#f07e79"/></linearGradient>
  <linearGradient id="k" x2="0" y2="1"><stop offset="0" stop-color="#2f70ac"/><stop offset=".5" stop-color="#3a8ad6"/><stop offset="1" stop-color="#3782c8"/></linearGradient>
  <linearGradient id="m" x2="0" y2="1"><stop offset="0" stop-color="#3782c8"/><stop offset=".5" stop-color="#3f92e0"/><stop offset="1" stop-color="#3888d4"/></linearGradient></defs>
  <g transform="translate(-8 -60) scale(.6887 .7375)" stroke-width="1.500">
   <path d="M560 900H1700V1600H0V1392z" fill="#949494"/><path d="M560 900H1700" stroke="#bbb" stroke-width="2"/>
   <path d="M0 1233h180L0 1392z" fill="#86704c"/><path d="M0 1233h180" stroke="#e8b45c"/>
   <g stroke="#f03022">
   <path d="M304 1360l69-92 117-35h48l-56 84h567l20 43z" fill="#cf2b20"/>
   <path d="M471 1262l60-14-18 19z" fill="#ee6a62"/>
   <path d="M304 1360h765v43H304z" fill="#ee6f69"/>
   <path d="M658 602h74l317 715H482l169-257 60-60-31-375-18 0z" fill="url(#r)"/>
   <path d="M417 832l71-24 2 425-71 127z" fill="#c3281b"/><path d="M370 832l80-24h38l-71 24z" fill="#cf2b20"/><path d="M370 832h47l2 528h-46z" fill="url(#f)"/>
   <path d="M523 612h60l37 18 45 4-80 110-7 12-78-46z" fill="#ee4c44"/><path d="M500 710l78 46 7 31-88-49z" fill="#e83424"/>
   <path d="M503 602h67l-71 17z" fill="#ee4c44"/><path d="M580 604l78-1 5 24-43 3z" fill="#ec3220"/>
   <path d="M799 1110l18 80-16 3z" fill="#ec5048"/></g>
   <path d="M660 633l20-5 6 24z" fill="#9da1a9"/>
   <path d="M652 631l32 19 115 460 4 133-17-62-121-478z" fill="#1d4d75"/>
   <path d="M557 652l95-21 13 72 121 478 17 62-95 20-18-62-120-476z" fill="#3782c8" stroke="#4090e0"/>
   <path d="M557 652l95-21 13 74-95 20z" fill="url(#k)"/><path d="M690 1201l96-20 17 62-95 20z" fill="url(#m)"/>
   <path d="M570 725l97-20M690 1201l96-20" stroke="#5aa6f0"/><path d="M730 898q4 50 17 72M734 910l12 50" stroke="#164068" fill="none" stroke-width="3"/>
   <g stroke="#111" stroke-width="1.500" fill="none"><path d="M750 922L1548 258M753 938L1548 1066" stroke-dasharray="9 8"/><path d="M750 922L1548 361M753 938L1548 1167" stroke-dasharray="17 15"/></g>
  </g>
  <path d="M72 902v60H12" fill="none" stroke="#5c5c5c" stroke-width="1.500"/>
  <g font-size="26" fill="#5c5c5c"><text x="76" y="903">z</text><text x="76" y="962">x</text><text x="16" y="961">y</text></g>
 </svg><span>Perspective</span></div>`);

def('panel-header',
 `:host{display:flex;flex-direction:column;flex:none;position:relative;background:linear-gradient(#f8f8f8,#e0e0e0);border-bottom:2px solid #d0d0d0}
  .t{display:grid;grid-template-columns:55px 1fr 55px;align-items:center;padding:8px 3px 0 0;font:22px/32px "Liberation Sans",Arial,sans-serif;text-align:center;color:#222}
  .t button{height:32px;border:2px solid #b0b0b0;border-radius:8px;background:none;display:flex;align-items:center;justify-content:center;gap:6px;padding:0;--s:20px}`,
 el => `<div class="t"><span></span><span style="margin-left:-32px">${el.getAttribute('label')}</span><button aria-label="Options"><ui-icon name="gear"></ui-icon><ui-icon name="chev" style="--s:12px"></ui-icon></button></div><slot></slot>`);

def('value-slider',
 `:host{display:block}label{position:relative;display:flex;height:37px;border:3px solid #878887;outline:1px solid #aaa;background:#fff;font:700 21px/35px Inter,sans-serif;color:#8e8e8e;white-space:nowrap}
  output{margin-left:var(--x);width:var(--w);height:30px;flex:none;border:3px solid #8a8a8a;border-top:0;background:#ecedf2;font:23px/28px "Liberation Sans",Arial,sans-serif;display:flex;justify-content:center}
  span{margin-left:auto;padding-right:2px}:host([left]) span{margin:0;padding-left:14px;order:-1;width:255px}
  input{position:absolute;inset:0;width:100%;height:100%;opacity:0}`,
 el => `<label><output>${el.getAttribute('value')}</output><span>${el.getAttribute('label')}</span><input type="range"></label>`);

def('rhino-panels',
 `:host{display:flex;flex-direction:column;flex:0 0 598px;min-height:0;border-left:2px solid #808080;background:#edebeb;font-size:22px;line-height:28px;color:#262626}
  .tabs{display:flex}.a{justify-content:center;gap:16px;padding:14px 12px 16px 0;--s:44px}.b{justify-content:center;gap:16px;padding:13px 15px 17px 0;--s:44px}.tabs button{border:0;background:none;padding:0}
  .p{display:flex;flex:0 0 424px;overflow:hidden}
  form{flex:1;padding:13px 18px 0 16px;margin:0}
  .r{display:grid;grid-template-columns:92px 1fr;column-gap:18px;align-items:center;height:46px;text-align:right}
  .r>:last-child{text-align:left}
  input.t{width:400px;height:34px;padding:0 7px;border:1px solid #d4d2d2;border-bottom:2px solid #b4b2b2;background:#fff}
  hr{border:0;height:2px;background:#d4d2d2;margin:0}
  .sb{width:26px;background:#fafafa;padding:6px}.sb i{display:block;width:16px;height:148px;border-radius:8px;background:#c3c2c2}
  select{appearance:none;border:0;background:none;padding:0}
  .btn{display:flex;justify-content:space-between;padding:11px 2px 11px 0;height:62px;flex:none}.btn div{display:flex}
  .s{position:relative;display:flex;flex:1;min-height:0;overflow:hidden;padding-left:8px}
  .f{width:560px;flex:none}
  .o{padding:0 5px 5px;border:3px solid #1a1a1a;border-top:0;border-radius:0 0 7px 7px;background:#b4b4b4}
  .i{border:3px solid #1a1a1a;border-top:0;padding:0 6px 5px;background:#edeef3;display:flex;flex-direction:column;gap:9px}
  .i::before{content:"";height:4px;background:#8a8a8a}
  .n{margin-top:7px;height:40px;border:3px solid #1a1a1a;border-radius:7px;background:#b4b4b4;padding:6px 10px}.n i{display:block;width:22px;height:20px;border:3px solid #111;border-radius:3px}
  .k{flex:1;padding:101px 0 0 6px}.k i{display:grid;place-items:center;height:208px;border:2px solid #1a1a1a;border-right:0;background:linear-gradient(90deg,#e8e8e8,#c4c4c4);box-shadow:inset 3px 3px #fff;font-style:normal}
  .k i::after{content:"";width:12px;height:12px;background:repeating-linear-gradient(90deg,#fff 4px,#ccc 4px 8px)}`,
 `<panel-header label="Properties: Viewport" style="height:118px"><div class="tabs a">${iconBtns('camera vframe')}</div></panel-header>
  <div class="p"><form>
   <div class="r"><label for="t">Title:</label><input class="t" id="t" value="DrawingsView"></div>
   <div class="r"><span>Size:</span><span>453 x 340</span></div>
   <check-option label="Locked" style="--h:36px;margin:4px 0 19px 40px"></check-option><hr style="margin-bottom:18px">
   Projection<radio-list options="Parallel|Perspective|Two point perspective" style="margin:2px 0 42px 42px"></radio-list><hr style="margin-bottom:22px">
   Wallpaper<div style="margin:16px 0 0 51px;display:flex;gap:100px;align-items:center;--s:12px"><select aria-label="Wallpaper"><option>Choose...</option></select><ui-icon name="chev" style="rotate:180deg"></ui-icon></div>
  </form><div class="sb"><i></i></div></div>
  <div style="height:3px;background:#808080;flex:none"></div>
  <panel-header label="Panels: Grasshopper" style="height:118px"><div class="tabs b">${iconBtns('layers layers2 page cube scroll monitor help window ghblue')}</div></panel-header>
  <div class="btn"><div><mac-button icon="ghost"></mac-button><mac-button icon="wirecan"></mac-button><mac-button icon="redcan" dim></mac-button></div><mac-button icon="pencil"></mac-button></div>
  <div class="s"><div class="f"><div class="o"><div class="i">
   <value-slider value="1350" label="student viewpoint z coordinate" style="--x:51px;--w:70px"></value-slider>
   <value-slider value="410" label="student activity range cloud radius mm" style="--x:15px;--w:70px"></value-slider>
   <value-slider value="83" label="phone width mm" style="--x:131px;--w:46px"></value-slider>
   <value-slider left value="163" label="phone length mm" style="--x:0px;--w:46px"></value-slider>
   <value-slider value="12.0" label="phone thickness" style="--x:19px;--w:65px"></value-slider>
   <value-slider value="-15" label="phone table offset" style="--x:167px;--w:41px"></value-slider>
   <value-slider value="77" label="phone viewing angle" style="--x:101px;--w:46px"></value-slider>
  </div></div><div class="n"><i></i></div></div><div class="k"><i></i></div></div>`);

def('rhino-status',
 `:host{display:flex;align-items:center;flex:none;height:56px;padding:0 285px 0 10px;background:#d7d7d7;font-size:22px;line-height:28px;--s:26px;color:#222;white-space:nowrap}
  .m{flex:1;margin-left:7px}.b{position:relative;margin:0 29px 0 34px}
  select{appearance:none;width:139px;height:31px;padding:0 10px;border:2px solid #b4b4b4;border-radius:7px;background:none;color:#aaa;font-size:20px;display:block;opacity:1}
  .b svg{position:absolute;right:9px;top:7px}.b~span{min-width:112px;margin-right:53px}.b~span:last-child{margin:0;min-width:0}`,
 `<ui-icon name="log"></ui-icon><span class="m">Display mode set to "Shaded".</span>Millimeters<div class="b"><select aria-label="Coordinates"><option>CPlane</option></select><svg width="12" height="18" fill="none" stroke="#aaa" stroke-width="2"><path d="M2 7l4-5 4 5M2 11l4 5 4-5"/></svg></div>
  <span>X: 984.744</span><span>Y: 151.499</span><span>Z: 0.000</span>`);

def('rhino-window',
 `:host{display:flex;flex-direction:column;min-height:0;margin-bottom:6px;border-left:2px solid #7c7c7e;border-radius:20px;overflow:hidden;background:#edebeb}
  .m{display:flex;flex:1;min-height:0}`,
 '<rhino-toolbar></rhino-toolbar><div class="m"><rhino-side></rhino-side><rhino-viewport></rhino-viewport><rhino-panels></rhino-panels></div><rhino-status></rhino-status>');

def('desktop-view',
 `:host{display:flex;height:100vh;background:linear-gradient(#0b0d12,#1a0e0a 30%,#120806) 0 0/6px 100% no-repeat,#b4b4b4;padding-left:6px}
  .l{flex:1539 1 0;min-width:0;display:flex;flex-direction:column;position:relative;z-index:2}
  gh-window{flex:1;box-shadow:0 20px 80px rgba(0,0,0,.45)}
  .o{flex:none;position:relative;z-index:1;margin-top:-20px;height:42px;border-radius:0 0 0 20px;padding:16px 0 0 12px;display:flex;gap:6px;--s:26px;font:500 22px/24px Inter,sans-serif;color:#222;background:#dedede;white-space:nowrap;overflow:hidden;margin-bottom:4px}
  rhino-window{flex:1979 1 0;min-width:0}`,
 `<div class="l"><gh-window></gh-window><div class="o"><ui-icon name="log"></ui-icon><span>Successfully read file "/Users/wanlunding/Desktop/CellPhoneStand_Model/CellPhoneStand_all/CellPhoneStand_forGrasshopper_all.3dm"</span></div></div><rhino-window></rhino-window>`);
</script>
</body>
</html>
